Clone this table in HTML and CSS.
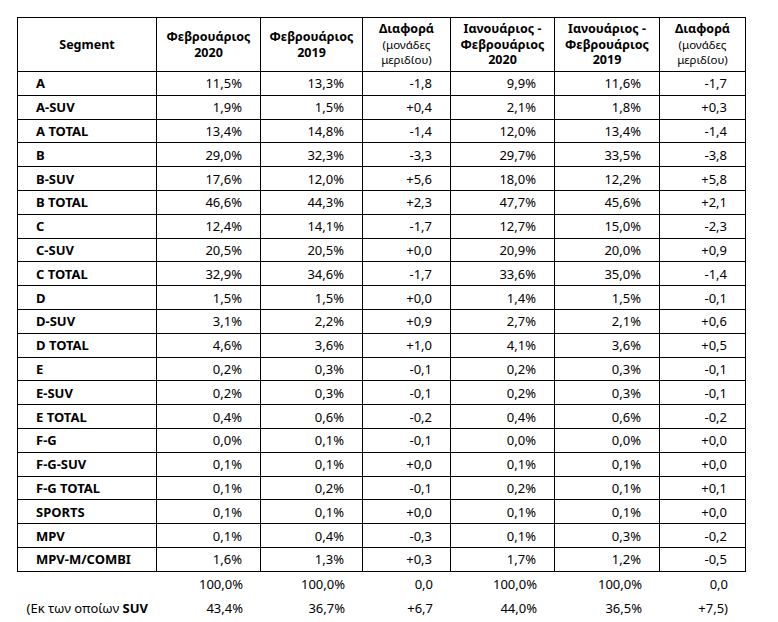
FILE: index.html
```html
<!DOCTYPE html>
<html lang="el">
<head>
<meta charset="utf-8">
<title>Segment</title>
<link rel="stylesheet" href="styles.css">
</head>
<body>
<table class="grid">
  <colgroup>
    <col class="c1"><col class="c2"><col class="c3"><col class="c4"><col class="c5"><col class="c6"><col class="c7">
  </colgroup>
  <thead>
    <tr class="head">
      <th>Segment</th>
      <th>Φεβρουάριος<br>2020</th>
      <th>Φεβρουάριος<br>2019</th>
      <th>Διαφορά<br><span class="sub">(μονάδες<br>μεριδίου)</span></th>
      <th>Ιανουάριος -<br>Φεβρουάριος<br>2020</th>
      <th>Ιανουάριος -<br>Φεβρουάριος<br>2019</th>
      <th>Διαφορά<br><span class="sub">(μονάδες<br>μεριδίου)</span></th>
    </tr>
  </thead>
  <tbody>
    <tr><td>A</td><td>11,5%</td><td>13,3%</td><td>-1,8</td><td>9,9%</td><td>11,6%</td><td>-1,7</td></tr>
    <tr><td>A-SUV</td><td>1,9%</td><td>1,5%</td><td>+0,4</td><td>2,1%</td><td>1,8%</td><td>+0,3</td></tr>
    <tr><td>A TOTAL</td><td>13,4%</td><td>14,8%</td><td>-1,4</td><td>12,0%</td><td>13,4%</td><td>-1,4</td></tr>
    <tr><td>B</td><td>29,0%</td><td>32,3%</td><td>-3,3</td><td>29,7%</td><td>33,5%</td><td>-3,8</td></tr>
    <tr><td>B-SUV</td><td>17,6%</td><td>12,0%</td><td>+5,6</td><td>18,0%</td><td>12,2%</td><td>+5,8</td></tr>
    <tr><td>B TOTAL</td><td>46,6%</td><td>44,3%</td><td>+2,3</td><td>47,7%</td><td>45,6%</td><td>+2,1</td></tr>
    <tr><td>C</td><td>12,4%</td><td>14,1%</td><td>-1,7</td><td>12,7%</td><td>15,0%</td><td>-2,3</td></tr>
    <tr><td>C-SUV</td><td>20,5%</td><td>20,5%</td><td>+0,0</td><td>20,9%</td><td>20,0%</td><td>+0,9</td></tr>
    <tr><td>C TOTAL</td><td>32,9%</td><td>34,6%</td><td>-1,7</td><td>33,6%</td><td>35,0%</td><td>-1,4</td></tr>
    <tr><td>D</td><td>1,5%</td><td>1,5%</td><td>+0,0</td><td>1,4%</td><td>1,5%</td><td>-0,1</td></tr>
    <tr><td>D-SUV</td><td>3,1%</td><td>2,2%</td><td>+0,9</td><td>2,7%</td><td>2,1%</td><td>+0,6</td></tr>
    <tr><td>D TOTAL</td><td>4,6%</td><td>3,6%</td><td>+1,0</td><td>4,1%</td><td>3,6%</td><td>+0,5</td></tr>
    <tr><td>E</td><td>0,2%</td><td>0,3%</td><td>-0,1</td><td>0,2%</td><td>0,3%</td><td>-0,1</td></tr>
    <tr><td>E-SUV</td><td>0,2%</td><td>0,3%</td><td>-0,1</td><td>0,2%</td><td>0,3%</td><td>-0,1</td></tr>
    <tr><td>E TOTAL</td><td>0,4%</td><td>0,6%</td><td>-0,2</td><td>0,4%</td><td>0,6%</td><td>-0,2</td></tr>
    <tr><td>F-G</td><td>0,0%</td><td>0,1%</td><td>-0,1</td><td>0,0%</td><td>0,0%</td><td>+0,0</td></tr>
    <tr><td>F-G-SUV</td><td>0,1%</td><td>0,1%</td><td>+0,0</td><td>0,1%</td><td>0,1%</td><td>+0,0</td></tr>
    <tr><td>F-G TOTAL</td><td>0,1%</td><td>0,2%</td><td>-0,1</td><td>0,2%</td><td>0,1%</td><td>+0,1</td></tr>
    <tr><td>SPORTS</td><td>0,1%</td><td>0,1%</td><td>+0,0</td><td>0,1%</td><td>0,1%</td><td>+0,0</td></tr>
    <tr><td>MPV</td><td>0,1%</td><td>0,4%</td><td>-0,3</td><td>0,1%</td><td>0,3%</td><td>-0,2</td></tr>
    <tr><td>MPV-M/COMBI</td><td>1,6%</td><td>1,3%</td><td>+0,3</td><td>1,7%</td><td>1,2%</td><td>-0,5</td></tr>
  </tbody>
  <tfoot>
    <tr><td></td><td>100,0%</td><td>100,0%</td><td>0,0</td><td>100,0%</td><td>100,0%</td><td>0,0</td></tr>
    <tr><td class="note">(Εκ των οποίων <b>SUV</b></td><td>43,4%</td><td>36,7%</td><td>+6,7</td><td>44,0%</td><td>36,5%</td><td>+7,5)</td></tr>
  </tfoot>
</table>
</body>
</html>
```

FILE: styles.css
```css
html, body {
  margin: 0;
  padding: 0;
  background: #ffffff;
}

body {
  padding: 17px 0 0 17px;
  font-family: "Noto Sans", "Liberation Sans", sans-serif;
  font-size: 13px;
  color: #000000;
}

.grid {
  border-collapse: separate;
  border-spacing: 0;
  table-layout: fixed;
  width: 729px;
}

.c1 { width: 140px; }
.c2 { width: 104px; }
.c3 { width: 102px; }
.c4 { width: 88px; }
.c5 { width: 104px; }
.c6 { width: 105px; }
.c7 { width: 86px; }

.grid thead th,
.grid tbody td {
  border-right: 1px solid #000;
  border-bottom: 1px solid #000;
}

.grid thead th:first-child,
.grid tbody td:first-child {
  border-left: 1px solid #000;
}

.grid thead th {
  border-top: 1px solid #000;
}

.head {
  height: 55px;
}

.grid th {
  font-weight: bold;
  font-size: 12.5px;
  text-align: center;
  vertical-align: middle;
  line-height: 15.5px;
  padding: 0 2px;
  box-sizing: border-box;
}

.sub {
  font-weight: normal;
  font-size: 11.5px;
  line-height: 14.5px;
}

.grid td {
  padding: 0 18px 0 0;
  text-align: right;
  vertical-align: middle;
  line-height: 16px;
  white-space: nowrap;
  box-sizing: border-box;
}

.grid tbody tr {
  height: 23.81px;
}

.grid tbody td:first-child {
  text-align: left;
  padding: 0 0 0 18px;
  font-weight: bold;
}

.grid tfoot tr {
  height: 24px;
}

.grid tfoot td.note {
  text-align: right;
  padding-right: 9px;
  font-weight: normal;
}

.note b {
  font-weight: bold;
}
```
